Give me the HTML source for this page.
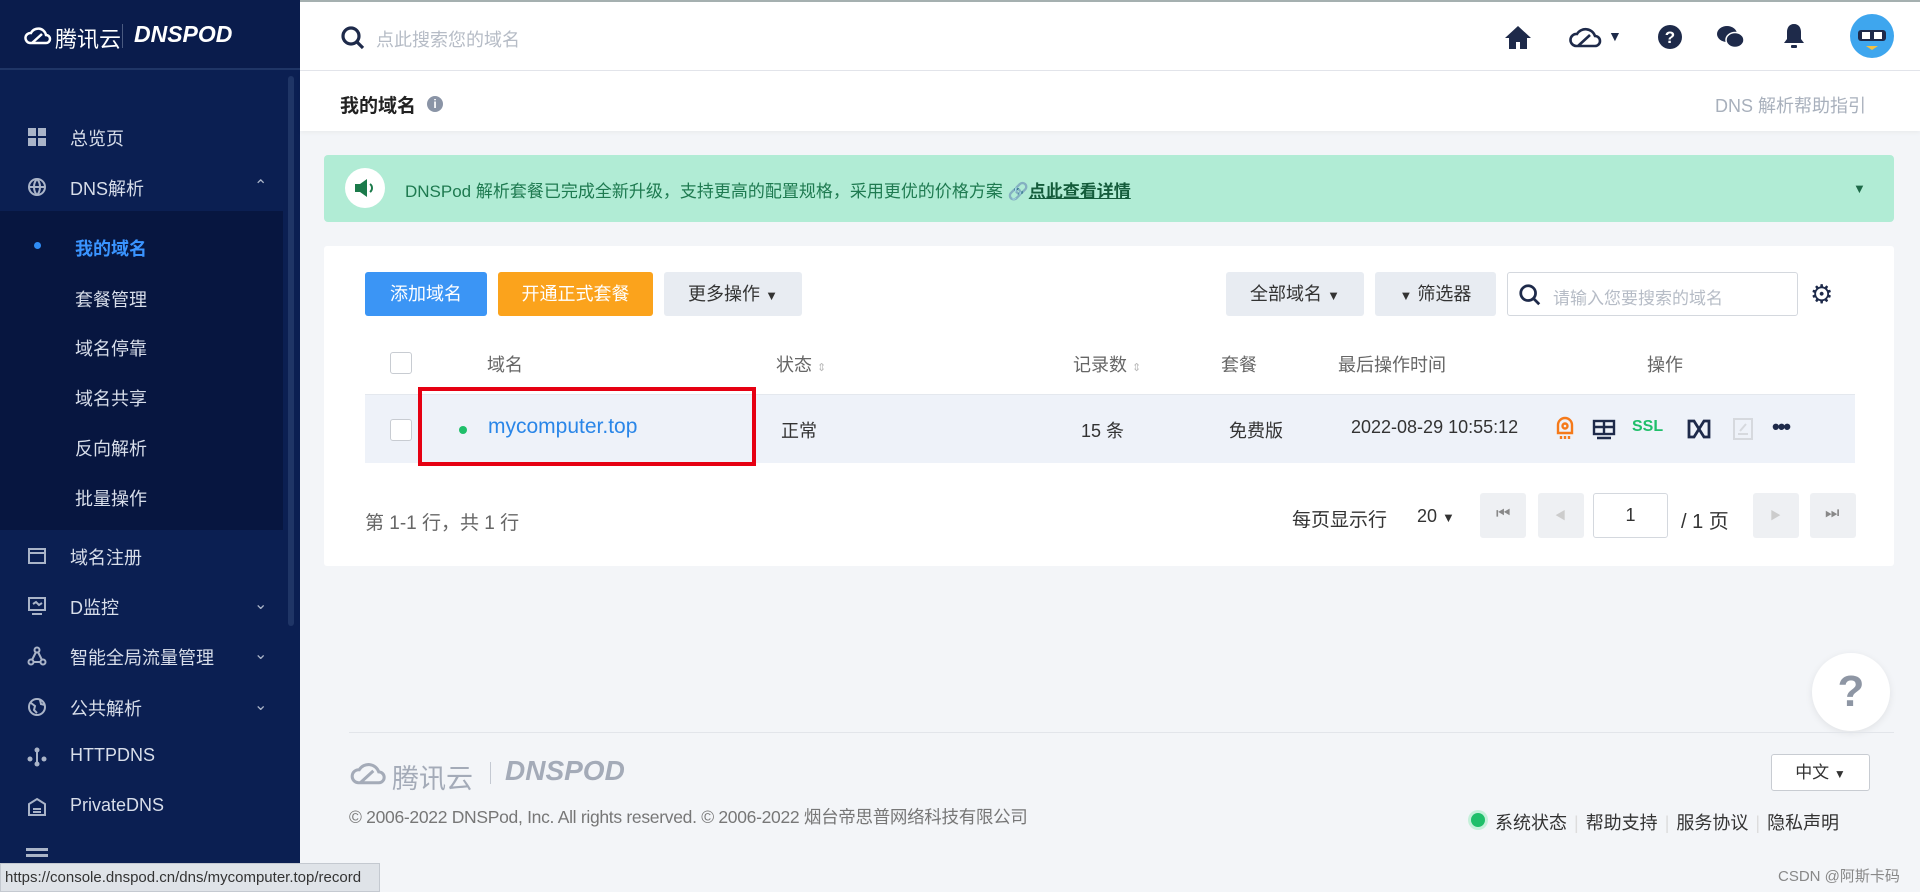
<!DOCTYPE html>
<html><head><meta charset="utf-8"><style>
*{margin:0;padding:0;box-sizing:border-box}
body{width:1920px;height:892px;overflow:hidden;background:#f3f5f8;font-family:"Liberation Sans","Noto Sans CJK SC",sans-serif;position:relative;color:#333}
.a{position:absolute;white-space:nowrap}
#sb{position:absolute;left:0;top:0;width:300px;height:892px;background:#0b1f52}
#sb .logo{height:70px;border-bottom:2px solid #1f3566;background:#0a1c4c}
.mi{position:absolute;left:70px;color:#d8deea;font-size:18px}
.ic{position:absolute;left:27px;width:20px;height:20px}
#sub{position:absolute;left:0;top:211px;width:283px;height:319px;background:#071640}
.si{position:absolute;left:75px;color:#d8deea;font-size:18px}
#hd{position:absolute;left:300px;top:0;right:0;height:71px;background:#fff;border-bottom:1px solid #e2e5ea;border-top:2px solid #a5b0b0}
#tt{position:absolute;left:300px;top:71px;right:0;height:60px;background:#fff;box-shadow:0 2px 4px rgba(0,0,0,.04)}
.btn{position:absolute;top:272px;height:44px;border-radius:3px;font-size:18px;line-height:44px;text-align:center}
.pg{position:absolute;top:493px;width:46px;height:45px;background:#eef0f3;border-radius:3px}
.th{position:absolute;top:351px;font-size:18px;color:#666}
.td{position:absolute;top:417px;font-size:18px;color:#333}
.sep{color:#ddd;margin:0 7px}
</style></head><body>
<div id="sb"><div class="logo"></div>
<svg class="a" style="left:24px;top:24px" width="30" height="22" viewBox="0 0 30 22"><path d="M6 19a5 5 0 0 1 1-10 8 8 0 0 1 15 2 4 4 0 0 1 0 8z M8 19l10-9" stroke="#fff" stroke-width="2.5" fill="none"/></svg>
<div class="a" style="left:55px;top:22px;color:#fff;font-size:22px">腾讯云</div>
<div class="a" style="left:122px;top:24px;width:1px;height:24px;background:#4a5a80"></div>
<div class="a" style="left:134px;top:21px;color:#fff;font-size:23px;font-weight:bold;font-style:italic">DNSPOD</div>
<div class="a" style="left:288px;top:76px;width:6px;height:550px;background:#1f3566;border-radius:3px"></div>
<div id="sub"></div>
<svg class="ic" style="top:127px" viewBox="0 0 20 20" fill="#aab4c8"><rect x="1" y="1" width="8" height="8"/><rect x="11" y="1" width="8" height="8"/><rect x="1" y="11" width="8" height="8"/><rect x="11" y="11" width="8" height="8"/></svg>
<div class="mi" style="top:125px">总览页</div>
<svg class="ic" style="top:177px" viewBox="0 0 20 20" fill="none" stroke="#aab4c8" stroke-width="2"><circle cx="10" cy="10" r="8"/><path d="M2 10h16M10 2c-4 4-4 12 0 16M10 2c4 4 4 12 0 16"/></svg>
<div class="mi" style="top:175px">DNS解析</div>
<div class="a" style="left:254px;top:176px;color:#aab4c8;font-size:16px">⌃</div>
<div class="a" style="left:34px;top:242px;width:7px;height:7px;border-radius:50%;background:#2f8df6"></div>
<div class="si" style="top:235px;color:#3a94ff;font-weight:bold">我的域名</div>
<div class="si" style="top:286px">套餐管理</div>
<div class="si" style="top:335px">域名停靠</div>
<div class="si" style="top:385px">域名共享</div>
<div class="si" style="top:435px">反向解析</div>
<div class="si" style="top:485px">批量操作</div>
<svg class="ic" style="top:546px" viewBox="0 0 20 20" fill="none" stroke="#aab4c8" stroke-width="2"><rect x="2" y="3" width="16" height="14"/><path d="M2 7h16"/></svg>
<div class="mi" style="top:544px">域名注册</div>
<svg class="ic" style="top:596px" viewBox="0 0 20 20" fill="none" stroke="#aab4c8" stroke-width="2"><rect x="2" y="2" width="16" height="12"/><path d="M5 18h10M6 8l3-2 3 3 3-2"/></svg>
<div class="mi" style="top:594px">D监控</div>
<div class="a" style="left:254px;top:594px;color:#aab4c8;font-size:16px">⌄</div>
<svg class="ic" style="top:646px" viewBox="0 0 20 20" fill="none" stroke="#aab4c8" stroke-width="2"><circle cx="10" cy="4" r="2.5"/><circle cx="4" cy="16" r="2.5"/><circle cx="16" cy="16" r="2.5"/><path d="M9 6l-4 8M11 6l4 8M6 16h8"/></svg>
<div class="mi" style="top:644px">智能全局流量管理</div>
<div class="a" style="left:254px;top:644px;color:#aab4c8;font-size:16px">⌄</div>
<svg class="ic" style="top:697px" viewBox="0 0 20 20" fill="none" stroke="#aab4c8" stroke-width="2"><circle cx="10" cy="10" r="8"/><path d="M4 6l4 3-1 4 3 3M13 3l1 4 4 1"/></svg>
<div class="mi" style="top:695px">公共解析</div>
<div class="a" style="left:254px;top:695px;color:#aab4c8;font-size:16px">⌄</div>
<svg class="ic" style="top:747px" viewBox="0 0 20 20" fill="#aab4c8"><circle cx="10" cy="3" r="2.5"/><circle cx="3" cy="12" r="2.5"/><circle cx="17" cy="12" r="2.5"/><circle cx="10" cy="17" r="2.5"/><rect x="9" y="3" width="2" height="14"/></svg>
<div class="mi" style="top:745px">HTTPDNS</div>
<svg class="ic" style="top:797px" viewBox="0 0 20 20" fill="none" stroke="#aab4c8" stroke-width="2"><path d="M10 2l8 5v11H2V7z M6 12h8M6 15h8"/></svg>
<div class="mi" style="top:795px">PrivateDNS</div>
<div class="a" style="left:26px;top:848px;width:22px;height:3px;background:#aab4c8;box-shadow:0 6px 0 #aab4c8"></div>
</div>
<div id="hd"></div>
<svg class="a" style="left:340px;top:25px" width="26" height="26" viewBox="0 0 26 26" fill="none" stroke="#1e2a4a" stroke-width="3.2"><circle cx="11" cy="11" r="8"/><path d="M17 17l6 6"/></svg>
<div class="a" style="left:376px;top:26px;color:#b6bcc6;font-size:18px">点此搜索您的域名</div>
<svg class="a" style="left:1504px;top:24px" width="28" height="26" viewBox="0 0 28 26" fill="#1e2a4a"><path d="M14 2L1 14h4v11h7v-7h4v7h7V14h4z"/></svg>
<svg class="a" style="left:1568px;top:25px" width="36" height="24" viewBox="0 0 36 24" fill="none" stroke="#1e2a4a" stroke-width="2.6"><path d="M8 21a6 6 0 0 1 1-12 10 10 0 0 1 18 2 5 5 0 0 1 0 10z M10 21l12-11"/></svg>
<div class="a" style="left:1608px;top:28px;font-size:14px;color:#1e2a4a">▼</div>
<svg class="a" style="left:1657px;top:24px" width="26" height="26" viewBox="0 0 26 26"><circle cx="13" cy="13" r="12" fill="#1e2a4a"/><text x="13" y="19" font-size="17" font-weight="bold" fill="#fff" text-anchor="middle" font-family="Liberation Sans">?</text></svg>
<svg class="a" style="left:1716px;top:25px" width="28" height="24" viewBox="0 0 28 24" fill="#1e2a4a"><ellipse cx="11" cy="9" rx="10" ry="8"/><ellipse cx="19" cy="15" rx="9" ry="7.5" stroke="#fff" stroke-width="1.5"/></svg>
<svg class="a" style="left:1782px;top:22px" width="24" height="28" viewBox="0 0 24 28" fill="#1e2a4a"><path d="M12 2c-5 0-7 4-7 8v7l-3 4h20l-3-4v-7c0-4-2-8-7-8z"/><rect x="9" y="23" width="6" height="3" rx="1"/></svg>
<svg class="a" style="left:1850px;top:14px" width="44" height="44" viewBox="0 0 44 44"><circle cx="22" cy="22" r="22" fill="#3ea6ee"/><rect x="8" y="16" width="28" height="11" rx="3" fill="#1e2a4a"/><rect x="12" y="18" width="8" height="7" fill="#fff"/><rect x="24" y="18" width="8" height="7" fill="#fff"/><path d="M16 32l6 4 6-4z" fill="#f5c040"/></svg>
<div id="tt"></div>
<div class="a" style="left:340px;top:91px;font-size:19px;font-weight:bold;color:#222">我的域名</div>
<div class="a" style="left:427px;top:96px;width:16px;height:16px;border-radius:50%;background:#8a94a6;color:#fff;font-size:12px;text-align:center;line-height:16px;font-weight:bold">i</div>
<div class="a" style="left:1715px;top:92px;font-size:18px;color:#a8b0bc">DNS 解析帮助指引</div>
<div class="a" style="left:324px;top:155px;width:1570px;height:67px;background:#b1ecd5;border-radius:4px"></div>
<div class="a" style="left:345px;top:168px;width:40px;height:40px;border-radius:50%;background:#fff"></div>
<svg class="a" style="left:353px;top:178px" width="24" height="20" viewBox="0 0 24 20"><path d="M2 6h5l7-5v18l-7-5H2z" fill="#1b7a4a"/><path d="M17 6a5 5 0 0 1 0 8" stroke="#1b7a4a" stroke-width="2" fill="none"/></svg>
<div class="a" style="left:405px;top:177px;font-size:17px;color:#1e7a50">DNSPod 解析套餐已完成全新升级，支持更高的配置规格，采用更优的价格方案 🔗<b style="text-decoration:underline;color:#145c3b">点此查看详情</b></div>
<div class="a" style="left:1853px;top:181px;font-size:13px;color:#1e6a48">▼</div>
<div class="a" style="left:324px;top:246px;width:1570px;height:320px;background:#fff;border-radius:3px"></div>
<div class="btn" style="left:365px;width:122px;background:#3b95f5;color:#fff">添加域名</div>
<div class="btn" style="left:498px;width:155px;background:#fba31c;color:#fff">开通正式套餐</div>
<div class="btn" style="left:664px;width:138px;background:#e8ecf2;color:#333">更多操作 <span style="font-size:13px">▼</span></div>
<div class="btn" style="left:1226px;width:138px;background:#e8ecf2;color:#333">全部域名 <span style="font-size:13px">▼</span></div>
<div class="btn" style="left:1375px;width:121px;background:#e8ecf2;color:#333"><span style="font-size:13px">▼</span> 筛选器</div>
<div class="a" style="left:1507px;top:272px;width:291px;height:44px;border:1px solid #d4d8de;border-radius:3px"></div>
<svg class="a" style="left:1518px;top:283px" width="24" height="24" viewBox="0 0 26 26" fill="none" stroke="#1e2a4a" stroke-width="3"><circle cx="11" cy="11" r="8"/><path d="M17 17l6 6"/></svg>
<div class="a" style="left:1553px;top:284px;font-size:17px;color:#b6bcc6">请输入您要搜索的域名</div>
<div class="a" style="left:1810px;top:279px;font-size:26px;color:#1e2a4a">⚙</div>
<div class="a" style="left:390px;top:352px;width:22px;height:22px;border:1px solid #c8ccd2;border-radius:3px;background:#fff"></div>
<div class="th" style="left:487px">域名</div>
<div class="th" style="left:776px">状态 <span style="font-size:11px;color:#bbb">⇕</span></div>
<div class="th" style="left:1073px">记录数 <span style="font-size:11px;color:#bbb">⇕</span></div>
<div class="th" style="left:1221px">套餐</div>
<div class="th" style="left:1338px">最后操作时间</div>
<div class="th" style="left:1647px">操作</div>
<div class="a" style="left:365px;top:394px;width:1490px;height:69px;background:#eef2f9;border-top:1px solid #e4e8ee"></div>
<div class="a" style="left:390px;top:419px;width:22px;height:22px;border:1px solid #c8ccd2;border-radius:3px;background:#fff"></div>
<div class="a" style="left:418px;top:387px;width:338px;height:79px;border:4px solid #e60012"></div>
<div class="a" style="left:459px;top:426px;width:8px;height:8px;border-radius:50%;background:#1fbf6a"></div>
<div class="a" style="left:488px;top:415px;font-size:21px;color:#2a86e8">mycomputer.top</div>
<div class="td" style="left:781px">正常</div>
<div class="td" style="left:1081px">15 条</div>
<div class="td" style="left:1229px">免费版</div>
<div class="td" style="left:1351px">2022-08-29 10:55:12</div>
<svg class="a" style="left:1554px;top:415px" width="22" height="26" viewBox="0 0 22 26" fill="none" stroke="#f57a1a" stroke-width="2.4"><path d="M4 18V10a7 7 0 0 1 14 0v8z"/><circle cx="11" cy="11" r="2.5"/><path d="M7 21v3M11 21v3M15 21v3"/></svg>
<svg class="a" style="left:1592px;top:419px" width="24" height="21" viewBox="0 0 24 21" fill="none" stroke="#1e2a4a" stroke-width="2.4"><rect x="2" y="2" width="20" height="13"/><path d="M12 2v13M2 8h20M5 19h14"/></svg>
<div class="a" style="left:1632px;top:418px;font-size:16px;font-weight:bold;color:#1fbf6a">SSL</div>
<svg class="a" style="left:1686px;top:418px" width="26" height="22" viewBox="0 0 26 22" fill="none" stroke="#1e2a4a" stroke-width="2.8"><path d="M8 3H3v16h5l10-16h5v16h-5z"/></svg>
<svg class="a" style="left:1732px;top:417px" width="22" height="24" viewBox="0 0 22 24" fill="none" stroke="#d6d9de" stroke-width="2"><rect x="2" y="2" width="18" height="20"/><path d="M6 17h10M8 14l6-7"/></svg>
<div class="a" style="left:1772px;top:414px;font-size:22px;color:#1e2a4a;letter-spacing:-2px;font-weight:bold">•••</div>
<div class="a" style="left:365px;top:508px;font-size:19px;color:#666">第 1-1 行，共 1 行</div>
<div class="a" style="left:1292px;top:505px;font-size:19px;color:#333">每页显示行</div>
<div class="a" style="left:1417px;top:506px;font-size:18px;color:#333">20 <span style="font-size:13px">▼</span></div>
<div class="pg" style="left:1480px"></div><div class="a" style="left:1496px;top:505px;font-size:16px;color:#888">⏮</div>
<div class="pg" style="left:1538px"></div><div class="a" style="left:1555px;top:507px;font-size:11px;color:#ccc">◀</div>
<div class="a" style="left:1593px;top:493px;width:75px;height:45px;border:1px solid #d4d8de;border-radius:3px;background:#fff;text-align:center;line-height:43px;font-size:18px">1</div>
<div class="a" style="left:1681px;top:505px;font-size:20px;color:#333">/ 1 页</div>
<div class="pg" style="left:1753px"></div><div class="a" style="left:1770px;top:507px;font-size:11px;color:#ccc">▶</div>
<div class="pg" style="left:1810px"></div><div class="a" style="left:1825px;top:505px;font-size:16px;color:#888">⏭</div>
<div class="a" style="left:1812px;top:653px;width:78px;height:78px;border-radius:50%;background:#fff;box-shadow:0 2px 8px rgba(0,0,0,.08);text-align:center;line-height:78px;font-size:44px;font-weight:bold;color:#8e96a4">?</div>
<div class="a" style="left:349px;top:732px;width:1545px;height:1px;background:#e2e5ea"></div>
<svg class="a" style="left:349px;top:760px" width="40" height="26" viewBox="0 0 36 24" fill="none" stroke="#a4abb8" stroke-width="2.8"><path d="M8 21a6 6 0 0 1 1-12 10 10 0 0 1 18 2 5 5 0 0 1 0 10z M10 21l12-11"/></svg>
<div class="a" style="left:392px;top:757px;font-size:27px;color:#a4abb8">腾讯云</div>
<div class="a" style="left:490px;top:762px;width:1px;height:22px;background:#c4c9d2"></div>
<div class="a" style="left:505px;top:755px;font-size:28px;font-weight:bold;font-style:italic;color:#a4abb8">DNSPOD</div>
<div class="a" style="left:349px;top:804px;font-size:17.5px;color:#777;letter-spacing:-0.3px">© 2006-2022 DNSPod, Inc. All rights reserved. © 2006-2022 烟台帝思普网络科技有限公司</div>
<div class="a" style="left:1771px;top:754px;width:99px;height:37px;border:1px solid #c8ccd2;border-radius:3px;background:#fff;font-size:17px;line-height:35px;text-align:center;color:#333">中文 <span style="font-size:12px">▼</span></div>
<div class="a" style="left:1471px;top:813px;width:14px;height:14px;border-radius:50%;background:#1fbf6a;box-shadow:0 0 0 3px #c5f0da"></div>
<div class="a" style="left:1495px;top:809px;font-size:18px;color:#333">系统状态<span class="sep">|</span>帮助支持<span class="sep">|</span>服务协议<span class="sep">|</span>隐私声明</div>
<div class="a" style="left:0;top:863px;width:380px;height:29px;background:#dfe3e8;border:1px solid #c4c9d0;font-size:15px;line-height:27px;padding-left:4px;color:#333">https://console.dnspod.cn/dns/mycomputer.top/record</div>
<div class="a" style="left:1778px;top:865px;font-size:15px;color:#888">CSDN @阿斯卡码</div>
</body></html>
